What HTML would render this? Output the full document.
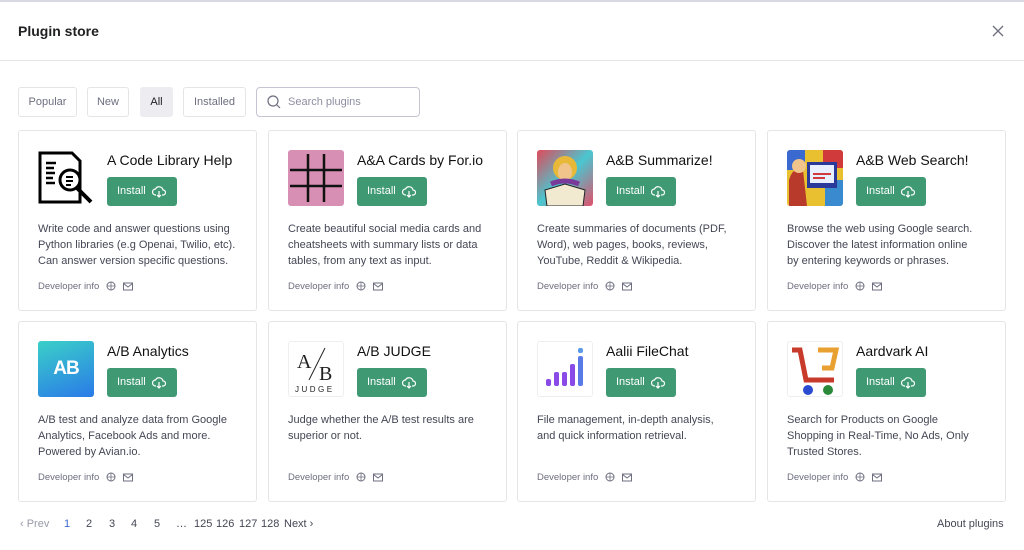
<!DOCTYPE html>
<html><head><meta charset="utf-8"><style>
*{box-sizing:border-box;margin:0;padding:0}
body{width:1024px;height:550px;background:#fff;font-family:"Liberation Sans",sans-serif;color:#111;position:relative;overflow:hidden}
.tb{position:absolute;left:0;right:0;top:0;height:2px;background:#d9d9e3}
.title{position:absolute;left:18px;top:23px;font-size:14px;font-weight:bold;color:#202123}
.close{position:absolute;left:991px;top:24px;width:14px;height:14px}
.hr{position:absolute;left:0;right:0;top:60px;border-top:1px solid #e5e5e5}
.tab{position:absolute;top:87px;height:30px;border:1px solid #e5e5e5;border-radius:3px;font-size:11px;color:#6e6e80;line-height:29px;text-align:center}
.tab.on{background:#ececf1;border-color:#ececf1;color:#202123}
.search{position:absolute;left:256px;top:87px;width:164px;height:30px;border:1px solid #c5c5d2;border-radius:4px;font-size:11px;color:#8e8ea0;line-height:29px;padding-left:31px}
.card{position:absolute;width:239px;height:181px;border:1px solid #e5e5e5;border-radius:3px}
.ic{position:absolute;left:19px;top:19px;width:56px;height:56px;border-radius:3px;overflow:hidden}
.nm{position:absolute;left:88px;top:21px;font-size:14px;color:#111}
.btn{position:absolute;left:88px;top:46px;width:70px;height:29px;background:#3f9a74;border-radius:3px;color:#fff;font-size:11px;line-height:29px;padding-left:10px}
.btn svg{position:absolute;left:45px;top:8px}
.ds{position:absolute;left:19px;top:90px;white-space:nowrap;font-size:11px;line-height:16px;color:#444654}
.dv{position:absolute;left:19px;top:150px;font-size:9.5px;color:#6e6e80}
.dv svg{vertical-align:-2px;margin-left:4px}
.pg{position:absolute;top:518px;font-size:11px;color:#444654}
</style></head><body>
<div class="tb"></div>
<div class="title">Plugin store</div>
<svg class="close" viewBox="0 0 14 14"><path d="M2 2L12 12M12 2L2 12" stroke="#6e6e80" stroke-width="1.3"/></svg>
<div class="hr"></div>
<div class="tab" style="left:18px;width:59px">Popular</div>
<div class="tab" style="left:87px;width:42px">New</div>
<div class="tab on" style="left:140px;width:33px">All</div>
<div class="tab" style="left:183px;width:63px">Installed</div>
<div class="search"><svg style="position:absolute;left:10px;top:7px" width="14" height="14" viewBox="0 0 14 14"><circle cx="6" cy="6" r="5" fill="none" stroke="#6e6e80" stroke-width="1.2"/><path d="M10 10L13 13" stroke="#6e6e80" stroke-width="1.2"/></svg>Search plugins</div>

<!-- row 1 -->
<div class="card" style="left:18px;top:130px">
<div class="ic" style="background:#fff"><svg width="56" height="56" viewBox="0 0 56 56"><path d="M2 3H34L42 11V52H2Z" fill="#fff" stroke="#000" stroke-width="3"/><path d="M8 13h10M8 18h8M8 23h9M8 28h7M8 33h9" stroke="#000" stroke-width="2.5"/><circle cx="32" cy="30" r="10" fill="#fff" stroke="#000" stroke-width="3"/><path d="M28 27h7M28 31h7M28 35h5" stroke="#000" stroke-width="2"/><path d="M39 38L53 52" stroke="#000" stroke-width="4"/></svg></div>
<div class="nm">A Code Library Help</div>
<div class="btn">Install<svg width="14" height="13" viewBox="0 0 14 13"><path d="M4 10H3.5A3 3 0 0 1 3.5 4 4 4 0 0 1 11 5a2.5 2.5 0 0 1 0 5H10M7 6v6M5 10l2 2 2-2" fill="none" stroke="#fff" stroke-width="1.2"/></svg></div>
<div class="ds">Write code and answer questions using<br>Python libraries (e.g Openai, Twilio, etc).<br>Can answer version specific questions.</div>
<div class="dv">Developer info <svg width="10" height="10" viewBox="0 0 10 10"><circle cx="5" cy="5" r="4" fill="none" stroke="#6e6e80"/><path d="M1 5h8M5 1v8" stroke="#6e6e80" stroke-width=".8"/></svg> <svg width="10" height="9" viewBox="0 0 10 9"><rect x=".5" y="1" width="9" height="7" fill="none" stroke="#6e6e80"/><path d="M.5 1.5L5 5l4.5-3.5" fill="none" stroke="#6e6e80"/></svg></div>
</div>
<div class="card" style="left:268px;top:130px">
<div class="ic" style="background:#d88fb4"><svg width="56" height="56"><path d="M20 4V52M36 4V52M2 20H54M2 36H54" stroke="#111" stroke-width="2.5"/></svg></div>
<div class="nm">A&amp;A Cards by For.io</div>
<div class="btn">Install<svg width="14" height="13" viewBox="0 0 14 13"><path d="M4 10H3.5A3 3 0 0 1 3.5 4 4 4 0 0 1 11 5a2.5 2.5 0 0 1 0 5H10M7 6v6M5 10l2 2 2-2" fill="none" stroke="#fff" stroke-width="1.2"/></svg></div>
<div class="ds">Create beautiful social media cards and<br>cheatsheets with summary lists or data<br>tables, from any text as input.</div>
<div class="dv">Developer info <svg width="10" height="10" viewBox="0 0 10 10"><circle cx="5" cy="5" r="4" fill="none" stroke="#6e6e80"/><path d="M1 5h8M5 1v8" stroke="#6e6e80" stroke-width=".8"/></svg> <svg width="10" height="9" viewBox="0 0 10 9"><rect x=".5" y="1" width="9" height="7" fill="none" stroke="#6e6e80"/><path d="M.5 1.5L5 5l4.5-3.5" fill="none" stroke="#6e6e80"/></svg></div>
</div>
<div class="card" style="left:517px;top:130px">
<div class="ic" style="background:linear-gradient(135deg,#e04a5a,#4ac6d0 50%,#e0506a)"><svg width="56" height="56"><circle cx="28" cy="18" r="12" fill="#e8b838"/><ellipse cx="28" cy="22" rx="7" ry="9" fill="#f0c48a"/><path d="M8 40L28 34 48 40 46 56H10Z" fill="#f2ead0" stroke="#222"/><path d="M14 34Q28 28 42 34" stroke="#7a3a9a" stroke-width="5" fill="none"/></svg></div>
<div class="nm">A&amp;B Summarize!</div>
<div class="btn">Install<svg width="14" height="13" viewBox="0 0 14 13"><path d="M4 10H3.5A3 3 0 0 1 3.5 4 4 4 0 0 1 11 5a2.5 2.5 0 0 1 0 5H10M7 6v6M5 10l2 2 2-2" fill="none" stroke="#fff" stroke-width="1.2"/></svg></div>
<div class="ds">Create summaries of documents (PDF,<br>Word), web pages, books, reviews,<br>YouTube, Reddit &amp; Wikipedia.</div>
<div class="dv">Developer info <svg width="10" height="10" viewBox="0 0 10 10"><circle cx="5" cy="5" r="4" fill="none" stroke="#6e6e80"/><path d="M1 5h8M5 1v8" stroke="#6e6e80" stroke-width=".8"/></svg> <svg width="10" height="9" viewBox="0 0 10 9"><rect x=".5" y="1" width="9" height="7" fill="none" stroke="#6e6e80"/><path d="M.5 1.5L5 5l4.5-3.5" fill="none" stroke="#6e6e80"/></svg></div>
</div>
<div class="card" style="left:767px;top:130px">
<div class="ic" style="background:#e8c030"><svg width="56" height="56"><rect x="0" y="0" width="18" height="20" fill="#3a6ad0"/><rect x="36" y="0" width="20" height="18" fill="#d03a3a"/><rect x="38" y="30" width="18" height="26" fill="#3a8ad0"/><rect x="20" y="12" width="30" height="26" fill="#2a3a9a"/><rect x="23" y="15" width="24" height="18" fill="#e8f0ff"/><path d="M26 24h18M26 28h12" stroke="#d03a3a" stroke-width="2"/><path d="M2 56V30Q6 16 16 20L20 56Z" fill="#b83a2a"/><circle cx="12" cy="16" r="7" fill="#f0c48a"/></svg></div>
<div class="nm">A&amp;B Web Search!</div>
<div class="btn">Install<svg width="14" height="13" viewBox="0 0 14 13"><path d="M4 10H3.5A3 3 0 0 1 3.5 4 4 4 0 0 1 11 5a2.5 2.5 0 0 1 0 5H10M7 6v6M5 10l2 2 2-2" fill="none" stroke="#fff" stroke-width="1.2"/></svg></div>
<div class="ds">Browse the web using Google search.<br>Discover the latest information online<br>by entering keywords or phrases.</div>
<div class="dv">Developer info <svg width="10" height="10" viewBox="0 0 10 10"><circle cx="5" cy="5" r="4" fill="none" stroke="#6e6e80"/><path d="M1 5h8M5 1v8" stroke="#6e6e80" stroke-width=".8"/></svg> <svg width="10" height="9" viewBox="0 0 10 9"><rect x=".5" y="1" width="9" height="7" fill="none" stroke="#6e6e80"/><path d="M.5 1.5L5 5l4.5-3.5" fill="none" stroke="#6e6e80"/></svg></div>
</div>

<!-- row 2 -->
<div class="card" style="left:18px;top:321px">
<div class="ic" style="background:linear-gradient(160deg,#3ad0c8,#2a7ae8)"><div style="position:absolute;left:0;right:0;top:17px;text-align:center;color:#fff;font-size:19px;font-weight:bold;letter-spacing:-1px">AB</div></div>
<div class="nm">A/B Analytics</div>
<div class="btn">Install<svg width="14" height="13" viewBox="0 0 14 13"><path d="M4 10H3.5A3 3 0 0 1 3.5 4 4 4 0 0 1 11 5a2.5 2.5 0 0 1 0 5H10M7 6v6M5 10l2 2 2-2" fill="none" stroke="#fff" stroke-width="1.2"/></svg></div>
<div class="ds">A/B test and analyze data from Google<br>Analytics, Facebook Ads and more.<br>Powered by Avian.io.</div>
<div class="dv">Developer info <svg width="10" height="10" viewBox="0 0 10 10"><circle cx="5" cy="5" r="4" fill="none" stroke="#6e6e80"/><path d="M1 5h8M5 1v8" stroke="#6e6e80" stroke-width=".8"/></svg> <svg width="10" height="9" viewBox="0 0 10 9"><rect x=".5" y="1" width="9" height="7" fill="none" stroke="#6e6e80"/><path d="M.5 1.5L5 5l4.5-3.5" fill="none" stroke="#6e6e80"/></svg></div>
</div>
<div class="card" style="left:268px;top:321px">
<div class="ic" style="border:1px solid #eee"><svg width="56" height="56"><text x="8" y="26" font-family="Liberation Serif" font-size="20" fill="#222">A</text><path d="M20 38L36 6" stroke="#222"/><text x="30" y="38" font-family="Liberation Serif" font-size="20" fill="#222">B</text><text x="6" y="50" font-family="Liberation Sans" font-size="8" letter-spacing="2.5" fill="#222">JUDGE</text></svg></div>
<div class="nm">A/B JUDGE</div>
<div class="btn">Install<svg width="14" height="13" viewBox="0 0 14 13"><path d="M4 10H3.5A3 3 0 0 1 3.5 4 4 4 0 0 1 11 5a2.5 2.5 0 0 1 0 5H10M7 6v6M5 10l2 2 2-2" fill="none" stroke="#fff" stroke-width="1.2"/></svg></div>
<div class="ds">Judge whether the A/B test results are<br>superior or not.</div>
<div class="dv">Developer info <svg width="10" height="10" viewBox="0 0 10 10"><circle cx="5" cy="5" r="4" fill="none" stroke="#6e6e80"/><path d="M1 5h8M5 1v8" stroke="#6e6e80" stroke-width=".8"/></svg> <svg width="10" height="9" viewBox="0 0 10 9"><rect x=".5" y="1" width="9" height="7" fill="none" stroke="#6e6e80"/><path d="M.5 1.5L5 5l4.5-3.5" fill="none" stroke="#6e6e80"/></svg></div>
</div>
<div class="card" style="left:517px;top:321px">
<div class="ic" style="border:1px solid #eee"><svg width="56" height="56"><g fill="#8a4ae8"><rect x="8" y="37" width="5" height="7" rx="2"/><rect x="16" y="30" width="5" height="14" rx="2"/><rect x="24" y="30" width="5" height="14" rx="2"/><rect x="32" y="22" width="5" height="22" rx="2"/></g><rect x="40" y="14" width="5" height="30" rx="2" fill="#5a7ae8"/><rect x="40" y="6" width="5" height="5" rx="2" fill="#5a9ae8"/></svg></div>
<div class="nm">Aalii FileChat</div>
<div class="btn">Install<svg width="14" height="13" viewBox="0 0 14 13"><path d="M4 10H3.5A3 3 0 0 1 3.5 4 4 4 0 0 1 11 5a2.5 2.5 0 0 1 0 5H10M7 6v6M5 10l2 2 2-2" fill="none" stroke="#fff" stroke-width="1.2"/></svg></div>
<div class="ds">File management, in-depth analysis,<br>and quick information retrieval.</div>
<div class="dv">Developer info <svg width="10" height="10" viewBox="0 0 10 10"><circle cx="5" cy="5" r="4" fill="none" stroke="#6e6e80"/><path d="M1 5h8M5 1v8" stroke="#6e6e80" stroke-width=".8"/></svg> <svg width="10" height="9" viewBox="0 0 10 9"><rect x=".5" y="1" width="9" height="7" fill="none" stroke="#6e6e80"/><path d="M.5 1.5L5 5l4.5-3.5" fill="none" stroke="#6e6e80"/></svg></div>
</div>
<div class="card" style="left:767px;top:321px">
<div class="ic" style="border:1px solid #eee"><svg width="56" height="56"><path d="M4 8H12L18 38H46" fill="none" stroke="#c83a2a" stroke-width="5"/><path d="M30 8H48L44 26H34" fill="none" stroke="#e8a030" stroke-width="5"/><circle cx="20" cy="48" r="5" fill="#2a4ad0"/><circle cx="40" cy="48" r="5" fill="#2a8a3a"/></svg></div>
<div class="nm">Aardvark AI</div>
<div class="btn">Install<svg width="14" height="13" viewBox="0 0 14 13"><path d="M4 10H3.5A3 3 0 0 1 3.5 4 4 4 0 0 1 11 5a2.5 2.5 0 0 1 0 5H10M7 6v6M5 10l2 2 2-2" fill="none" stroke="#fff" stroke-width="1.2"/></svg></div>
<div class="ds">Search for Products on Google<br>Shopping in Real-Time, No Ads, Only<br>Trusted Stores.</div>
<div class="dv">Developer info <svg width="10" height="10" viewBox="0 0 10 10"><circle cx="5" cy="5" r="4" fill="none" stroke="#6e6e80"/><path d="M1 5h8M5 1v8" stroke="#6e6e80" stroke-width=".8"/></svg> <svg width="10" height="9" viewBox="0 0 10 9"><rect x=".5" y="1" width="9" height="7" fill="none" stroke="#6e6e80"/><path d="M.5 1.5L5 5l4.5-3.5" fill="none" stroke="#6e6e80"/></svg></div>
</div>

<div class="pg" style="left:20px;color:#9a9aaa">‹ Prev</div>
<div class="pg" style="left:64px;color:#3a6ad0">1</div>
<div class="pg" style="left:86px">2</div>
<div class="pg" style="left:109px">3</div>
<div class="pg" style="left:131px">4</div>
<div class="pg" style="left:154px">5</div>
<div class="pg" style="left:176px">…</div>
<div class="pg" style="left:194px">125</div>
<div class="pg" style="left:216px">126</div>
<div class="pg" style="left:239px">127</div>
<div class="pg" style="left:261px">128</div>
<div class="pg" style="left:284px">Next ›</div>
<div class="pg" style="left:937px">About plugins</div>
</body></html>
